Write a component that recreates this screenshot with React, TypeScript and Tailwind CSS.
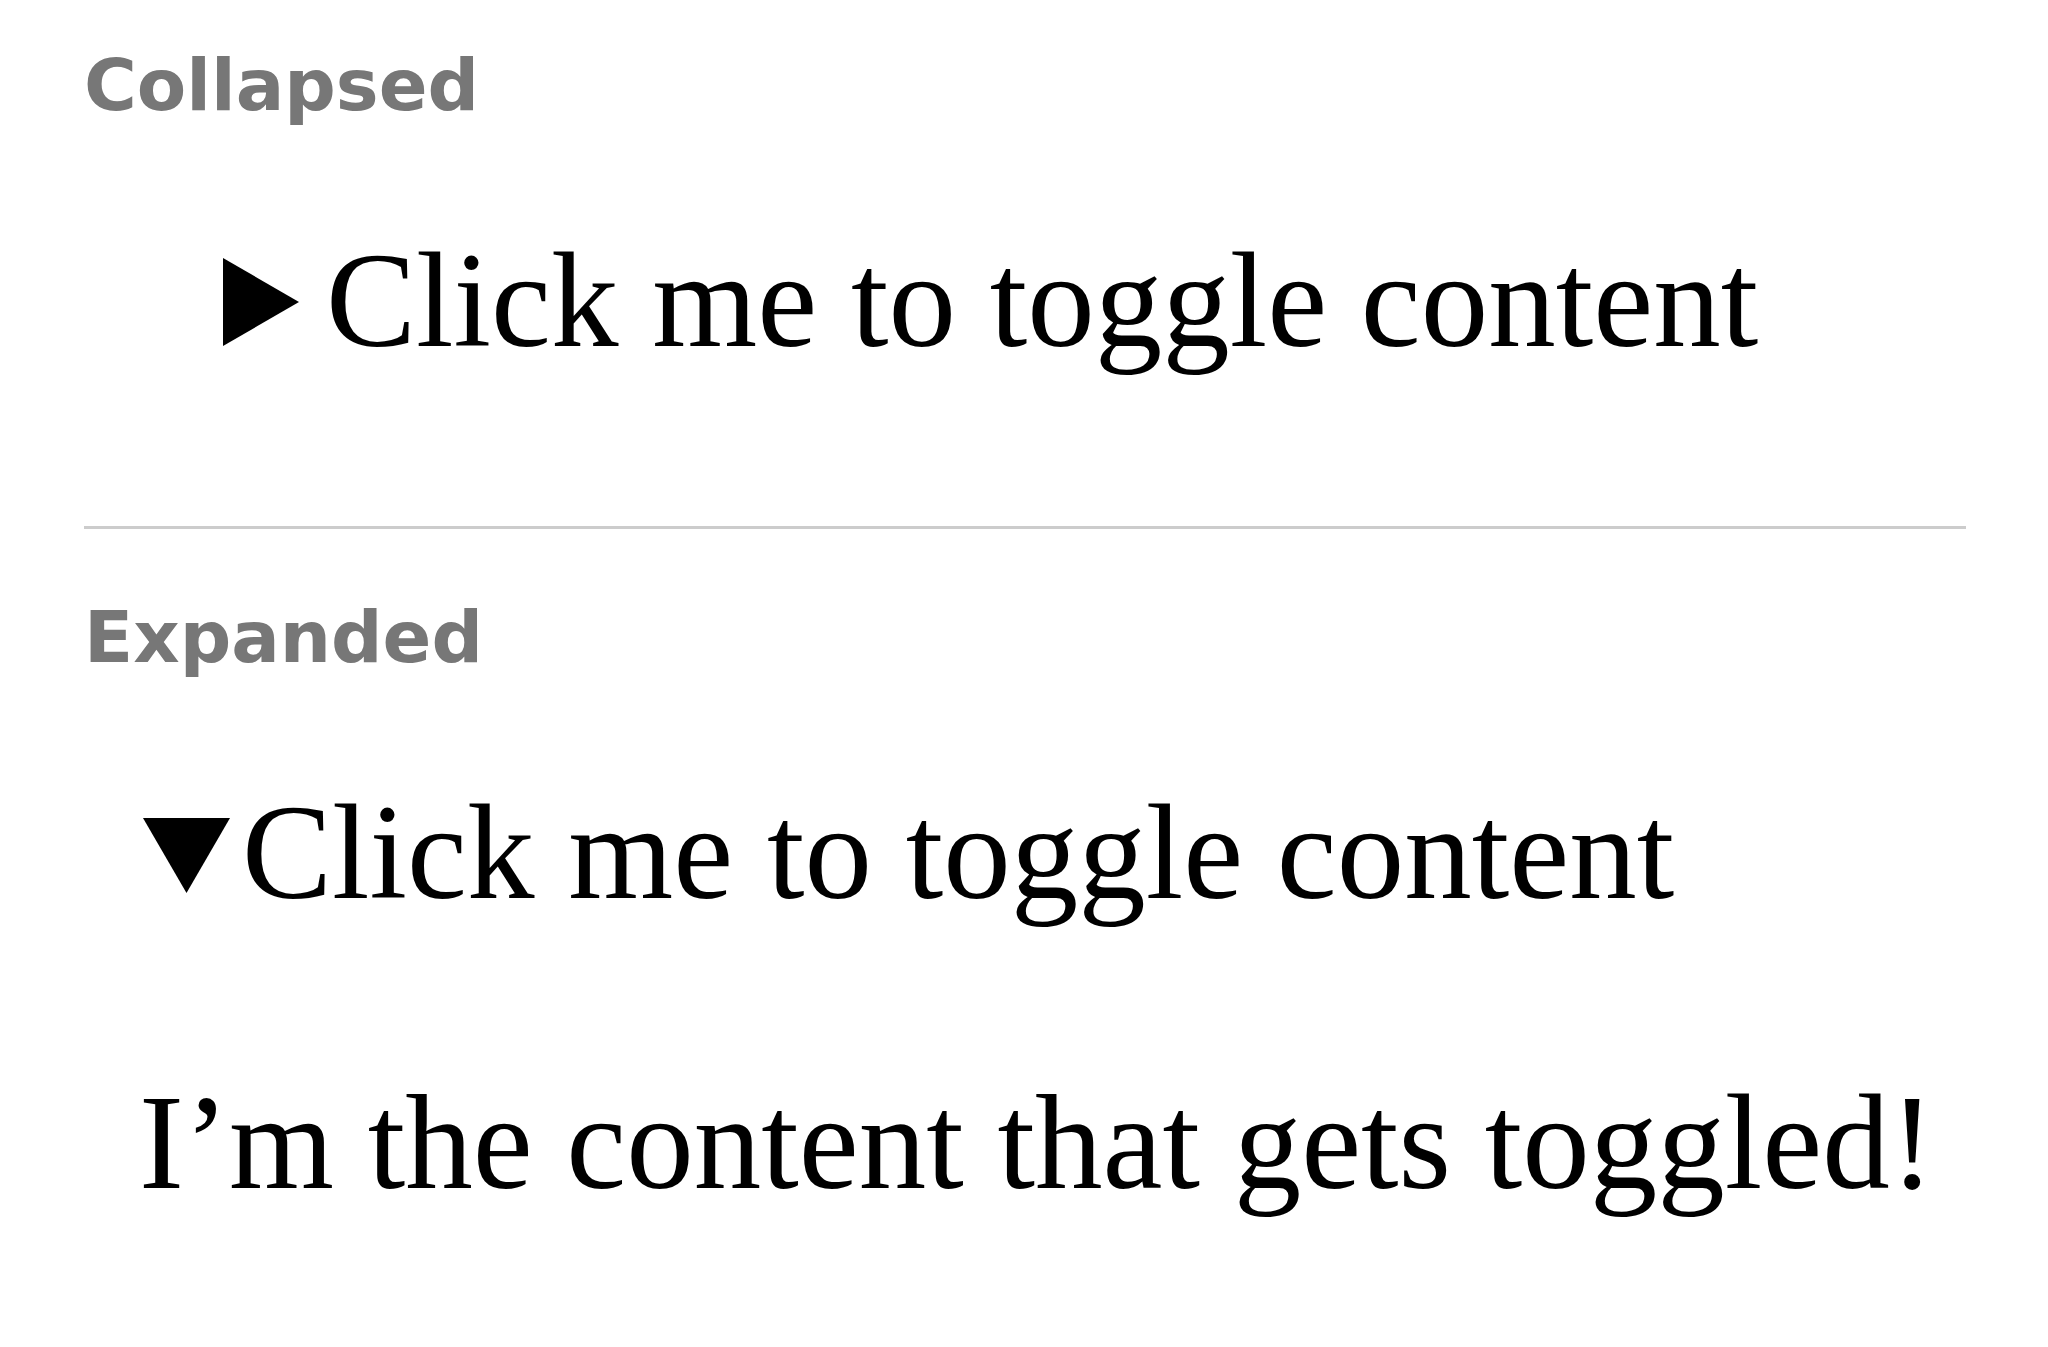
const Label = ({ text }: { text: string }) => (
  <div className="font-['DejaVu_Sans',sans-serif] font-bold text-[72px] leading-none text-[#777777]">
    {text}
  </div>
);

const App = () => {
  return (
    <div className="min-h-screen bg-white pl-[84px] pr-[82px] pt-[49px] text-black">
      {/* Collapsed */}
      <Label text="Collapsed" />
      <div className="mt-[112px] pl-[139px] font-['Liberation_Serif',serif] text-[135px] leading-none">
        <svg width="76" height="88" viewBox="0 0 76 88" className="inline-block align-baseline mr-[27px]">
          <polygon points="0,0 76,44 0,88" fill="black" />
        </svg>
        Click me to toggle content
      </div>

      <hr className="mt-[158px] border-0 border-t-[3px] border-[#cccccc]" />

      {/* Expanded */}
      <div className="mt-[72px]">
        <Label text="Expanded" />
      </div>
      <div className="mt-[112px] pl-[59px] font-['Liberation_Serif',serif] text-[135px] leading-none">
        <svg width="87" height="75" viewBox="0 0 87 75" className="inline-block align-baseline mr-[12px] mb-[5px]">
          <polygon points="0,0 87,0 43.5,75" fill="black" />
        </svg>
        Click me to toggle content
      </div>
      <p className="mt-[155px] pl-[55px] font-['Liberation_Serif',serif] text-[135px] leading-none">
        I’m the content that gets toggled!
      </p>
    </div>
  );
};

export default App;
